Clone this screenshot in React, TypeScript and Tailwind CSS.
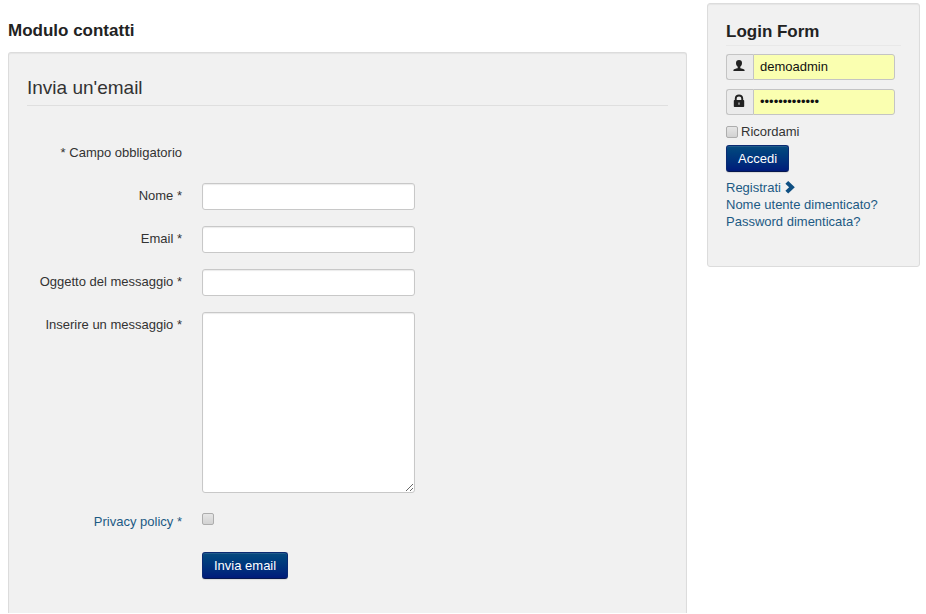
import React from "react";

const textField =
  "w-[213px] rounded-[3px] border border-[#c8c8c8] bg-white px-1.5 text-[#333] shadow-[inset_0_1px_1px_rgba(0,0,0,0.08)] outline-none";

const loginField =
  "min-w-0 flex-1 rounded-r-[3px] border border-[#c4c4c4] bg-[#faffb0] px-1.5 text-[#111] outline-none";

const addOn =
  "flex w-[27px] shrink-0 items-start justify-center rounded-l-[3px] border border-r-0 border-[#c4c4c4] bg-[#ebebeb] pt-1 pr-0.5";

const primaryButton =
  "h-[27px] cursor-pointer rounded-[3px] border border-[#0a2a72] border-b-[#06174f] bg-linear-to-b from-[#084a7e] to-[#001a7a] px-[11px] text-white shadow-[inset_0_1px_0_rgba(255,255,255,0.1),0_1px_1px_rgba(0,0,0,0.1)]";

const checkbox =
  "size-3 shrink-0 appearance-none rounded-[2px] border border-[#adadad] bg-linear-to-b from-[#e6e6e6] to-[#d2d2d2] checked:from-[#084a7e] checked:to-[#001a7a]";

const link = "text-[#1c5a84] hover:underline";

const UserIcon = () => (
  <svg viewBox="0 0 12 13" className="h-[13px] w-3 fill-[#222]" aria-hidden="true">
    <path d="M6 1c2 0 3 1.200 3 3 0 1.600-.7 3-1.700 3.700v1.200c.3.6 3.800.8 4.200 2 .1.300.1.700.1 1.100H.4c0-.4 0-.8.1-1.100.4-1.200 3.900-1.400 4.200-2V7.700C3.700 7 3 5.600 3 4c0-1.800 1-3 3-3z" />
  </svg>
);

const LockIcon = () => (
  <svg viewBox="0 0 12 14" className="h-3.5 w-3 fill-[#222]" aria-hidden="true">
    <path
      fillRule="evenodd"
      d="M1.800 6V4.600C1.800 2.200 3.500.6 6 .6s4.200 1.600 4.200 4V6h.3c.4 0 .7.3.7.7v5.600c0 .4-.3.7-.7.7h-9c-.4 0-.7-.3-.7-.7V6.700c0-.4.3-.7.7-.7zm1.900 0h4.600V4.700c0-1.400-.9-2.300-2.300-2.300s-2.300.9-2.300 2.300zM5.500 8.500v2.200h1V8.500z"
    />
  </svg>
);

const ChevronIcon = () => (
  <svg
    viewBox="0 0 10 13"
    className="ml-1 h-[13px] w-2.5 fill-[#0f4f82]"
    aria-hidden="true"
  >
    <path d="M3.200 0 9.800 6.200 3.200 12.400.4 9.700l3.700-3.500L.4 2.700z" />
  </svg>
);

type RowProps = {
  id: string;
  label: React.ReactNode;
  children: React.ReactNode;
};

const Row = ({ id, label, children }: RowProps) => (
  <div className="flex min-h-[27px] gap-5">
    <label htmlFor={id} className="w-[155px] shrink-0 pt-1 text-right">
      {label}
    </label>
    {children}
  </div>
);

const ContactForm = () => {
  return (
    <form
      onSubmit={(e) => e.preventDefault()}
      className="rounded-t-[3px] border border-b-0 border-[#dcdcdc] bg-[#f1f1f1] px-[18px] pt-[18px] pb-[34px] shadow-[inset_0_1px_1px_rgba(0,0,0,0.05)]"
    >
      <h3 className="mb-[34px] border-b border-[#dfdfdf] text-[19px] leading-[34px]">
        Invia un'email
      </h3>
      <div className="flex flex-col gap-4">
        <p className="min-h-[27px] w-[155px] pt-1 text-right">
          * Campo obbligatorio
        </p>
        <Row id="name" label="Nome *">
          <input id="name" type="text" className={`${textField} h-[27px]`} />
        </Row>
        <Row id="email" label="Email *">
          <input id="email" type="email" className={`${textField} h-[27px]`} />
        </Row>
        <Row id="subject" label="Oggetto del messaggio *">
          <input id="subject" type="text" className={`${textField} h-[27px]`} />
        </Row>
        <Row id="message" label="Inserire un messaggio *">
          <textarea id="message" className={`${textField} h-[181px]`} />
        </Row>
        <Row
          id="privacy"
          label={
            <a href="#privacy" className={link}>
              Privacy policy *
            </a>
          }
        >
          <input id="privacy" type="checkbox" className={`${checkbox} mt-1`} />
        </Row>
        <div className="pl-[175px]">
          <button type="submit" className={primaryButton}>
            Invia email
          </button>
        </div>
      </div>
    </form>
  );
};

const LoginForm = () => {
  return (
    <aside className="w-[213px] shrink-0 rounded-[3px] border border-[#dcdcdc] bg-[#f1f1f1] px-[18px] pt-[14px] pb-9 shadow-[inset_0_1px_1px_rgba(0,0,0,0.05)]">
      <h3 className="mb-2 border-b border-[#e8e8e8] text-[17px] leading-[27px] font-bold text-[#222]">
        Login Form
      </h3>
      <form onSubmit={(e) => e.preventDefault()}>
        <div className="mb-[9px] flex h-[26px] w-[169px]">
          <label htmlFor="username" aria-label="Nome utente" className={addOn}>
            <UserIcon />
          </label>
          <input
            id="username"
            type="text"
            defaultValue="demoadmin"
            className={loginField}
          />
        </div>
        <div className="mb-2 flex h-[26px] w-[169px]">
          <label htmlFor="password" aria-label="Password" className={addOn}>
            <LockIcon />
          </label>
          <input
            id="password"
            type="password"
            defaultValue="demopassword1"
            className={loginField}
          />
        </div>
        <label className="mb-1 flex items-center gap-[3px]">
          <input type="checkbox" className={checkbox} />
          Ricordami
        </label>
        <button type="submit" className={primaryButton}>
          Accedi
        </button>
        <ul className="mt-[7px] leading-[17px]">
          <li>
            <a href="#register" className={`${link} flex items-center`}>
              Registrati
              <ChevronIcon />
            </a>
          </li>
          <li>
            <a href="#username-reminder" className={link}>
              Nome utente dimenticato?
            </a>
          </li>
          <li>
            <a href="#password-reset" className={link}>
              Password dimenticata?
            </a>
          </li>
        </ul>
      </form>
    </aside>
  );
};

export default function App() {
  return (
    <div className="flex items-start gap-5 bg-white pr-1.5 pl-2 font-['Liberation_Sans',Arial,sans-serif] text-[13px] leading-[18px] text-[#333]">
      <main className="min-w-0 flex-1 pt-5">
        <h2 className="mb-2.5 text-[17px] leading-[22px] font-bold text-[#222]">
          Modulo contatti
        </h2>
        <ContactForm />
      </main>
      <div className="pt-[3px]">
        <LoginForm />
      </div>
    </div>
  );
}
